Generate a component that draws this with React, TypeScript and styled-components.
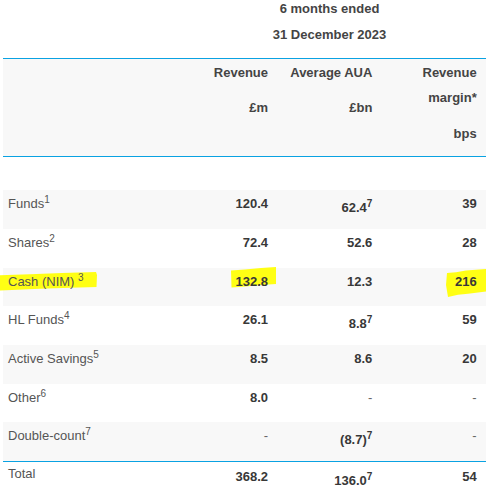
import React from 'react';
import styled, { createGlobalStyle } from 'styled-components';

const Global = createGlobalStyle`
  html, body { margin: 0; padding: 0; background: #ffffff; }
  body {
    font-family: "Liberation Sans", Arial, sans-serif;
    font-size: 13px;
    color: #444444;
  }
`;

const BLUE = '#0aa2e2';
const SHADE = '#f8f8f8';

const Wrap = styled.div`
  padding-left: 3px;
  width: 483px;
`;

const Table = styled.table`
  width: 483px;
  border-collapse: collapse;
  border-spacing: 0;
  table-layout: fixed;
`;

const TitleCell = styled.th`
  padding: 0 0 14.3px;
  text-align: center;
  font-weight: 700;
  color: #444444;
  vertical-align: top;
`;

const TitleLine = styled.p<{ $second?: boolean }>`
  margin: ${(p) => (p.$second ? '7.7px 0 0' : '0')};
  line-height: 18px;
`;

const HeadCell = styled.th`
  background: ${SHADE};
  border-top: 1px solid ${BLUE};
  border-bottom: 1px solid ${BLUE};
  vertical-align: top;
  text-align: right;
  font-weight: 700;
  color: #444444;
  padding: 1px 9.3px 0 0;
`;

const HeadLine = styled.p`
  margin: 0 0 10px;
  line-height: 25.5px;
`;

const SpacerRow = styled.tr`
  height: 33.5px;
`;

const Row = styled.tr<{ $shade?: boolean; $total?: boolean }>`
  height: ${(p) => (p.$total ? '30px' : '38.67px')};
  background: ${(p) => (p.$shade ? SHADE : 'transparent')};
  & > td {
    border-top: ${(p) => (p.$total ? `1px solid ${BLUE}` : '0')};
  }
`;

const Cell = styled.td<{ $label?: boolean; $total?: boolean }>`
  vertical-align: top;
  line-height: 18px;
  padding-top: ${(p) => (p.$total ? (p.$label ? '3.5px' : '6px') : '5px')};
  padding-right: ${(p) => (p.$label ? '0' : '9.3px')};
  padding-bottom: 0;
  padding-left: ${(p) => (p.$label ? '5px' : '0')};
  text-align: ${(p) => (p.$label ? 'left' : 'right')};
  font-weight: ${(p) => (p.$label ? 400 : 700)};
  color: ${(p) => (p.$label ? '#555555' : '#383838')};
  white-space: nowrap;
`;

const Dash = styled.span`
  font-weight: 400;
  color: #666666;
`;

const LabelSup = styled.sup`
  font-size: 10px;
  vertical-align: super;
  line-height: 0;
`;

const ValueSup = styled.sup`
  font-size: 10px;
  vertical-align: super;
`;

const Mark = styled.span`
  position: relative;
  display: inline-block;
  isolation: isolate;
`;

const MarkSvg = styled.svg<{ $x: number; $y: number }>`
  position: absolute;
  left: ${(p) => p.$x}px;
  top: ${(p) => p.$y}px;
  z-index: -1;
  overflow: visible;
`;

const YELLOW = '#ffff14';

type Hl = { x: number; y: number; w: number; h: number; points: string };

const Highlight: React.FC<{ hl: Hl; children: React.ReactNode }> = ({ hl, children }) => (
  <Mark>
    <MarkSvg $x={hl.x} $y={hl.y} width={hl.w} height={hl.h} viewBox={`0 0 ${hl.w} ${hl.h}`}>
      <polygon points={hl.points} fill={YELLOW} />
    </MarkSvg>
    {children}
  </Mark>
);

const cashHl: Hl = {
  x: -8,
  y: -1.3,
  w: 97,
  h: 18.5,
  points: '0,3.2 30,2.2 62,1 96,0 97,3 96.5,15 70,15.8 40,16.8 12,18 0,18.5',
};

const revHl: Hl = {
  x: -4.5,
  y: -5.8,
  w: 45,
  h: 20.5,
  points: '0,3.5 14,2.6 30,1 45,0 45,17 30,18 14,19.4 0.5,20.5',
};

const marginHl: Hl = {
  x: -9.5,
  y: -4.3,
  w: 40.5,
  h: 28,
  points: '1,4 10,3.2 20,1.6 40.5,0 40.5,22.5 32,23.6 22,24.8 12,25.8 2,28 0,16',
};

type Value = { v: string; sup?: string } | null;

type DataRow = {
  label: string;
  sup: string;
  spaced?: boolean;
  values: Value[];
  shade?: boolean;
  mark?: boolean;
};

const rows: DataRow[] = [
  { label: 'Funds', sup: '1', values: [{ v: '120.4' }, { v: '62.4', sup: '7' }, { v: '39' }], shade: true },
  { label: 'Shares', sup: '2', values: [{ v: '72.4' }, { v: '52.6' }, { v: '28' }] },
  { label: 'Cash (NIM)', sup: '3', spaced: true, values: [{ v: '132.8' }, { v: '12.3' }, { v: '216' }], shade: true, mark: true },
  { label: 'HL Funds', sup: '4', values: [{ v: '26.1' }, { v: '8.8', sup: '7' }, { v: '59' }] },
  { label: 'Active Savings', sup: '5', values: [{ v: '8.5' }, { v: '8.6' }, { v: '20' }], shade: true },
  { label: 'Other', sup: '6', values: [{ v: '8.0' }, null, null] },
  { label: 'Double-count', sup: '7', values: [null, { v: '(8.7)', sup: '7' }, null], shade: true },
];

const ValueText: React.FC<{ value: Value }> = ({ value }) => {
  if (!value) return <Dash>-</Dash>;
  return (
    <>
      {value.v}
      {value.sup && <ValueSup>{value.sup}</ValueSup>}
    </>
  );
};

export default function App() {
  return (
    <>
      <Global />
      <Wrap>
        <Table>
          <colgroup>
            <col style={{ width: 170 }} />
            <col style={{ width: 104.33 }} />
            <col style={{ width: 104.33 }} />
            <col style={{ width: 104.34 }} />
          </colgroup>
          <thead>
            <tr>
              <TitleCell />
              <TitleCell colSpan={3}>
                <TitleLine>6 months ended</TitleLine>
                <TitleLine $second>31 December 2023</TitleLine>
              </TitleCell>
            </tr>
            <tr>
              <HeadCell />
              <HeadCell>
                <HeadLine>Revenue</HeadLine>
                <HeadLine>£m</HeadLine>
              </HeadCell>
              <HeadCell>
                <HeadLine>Average AUA</HeadLine>
                <HeadLine>£bn</HeadLine>
              </HeadCell>
              <HeadCell>
                <HeadLine>Revenue margin*</HeadLine>
                <HeadLine>bps</HeadLine>
              </HeadCell>
            </tr>
          </thead>
          <tbody>
            <SpacerRow>
              <td colSpan={4} />
            </SpacerRow>
            {rows.map((r) => {
              const labelContent = (
                <>
                  {r.label}
                  {r.spaced ? ' ' : ''}
                  <LabelSup>{r.sup}</LabelSup>
                </>
              );
              return (
                <Row key={r.label} $shade={r.shade}>
                  <Cell $label>
                    {r.mark ? <Highlight hl={cashHl}>{labelContent}</Highlight> : labelContent}
                  </Cell>
                  {r.values.map((v, i) => {
                    const content = <ValueText value={v} />;
                    let marked: React.ReactNode = content;
                    if (r.mark && i === 0) marked = <Highlight hl={revHl}>{content}</Highlight>;
                    if (r.mark && i === 2) marked = <Highlight hl={marginHl}>{content}</Highlight>;
                    return <Cell key={i}>{marked}</Cell>;
                  })}
                </Row>
              );
            })}
            <Row $total>
              <Cell $label $total>Total</Cell>
              <Cell $total>368.2</Cell>
              <Cell $total>
                136.0<ValueSup>7</ValueSup>
              </Cell>
              <Cell $total>54</Cell>
            </Row>
          </tbody>
        </Table>
      </Wrap>
    </>
  );
}
